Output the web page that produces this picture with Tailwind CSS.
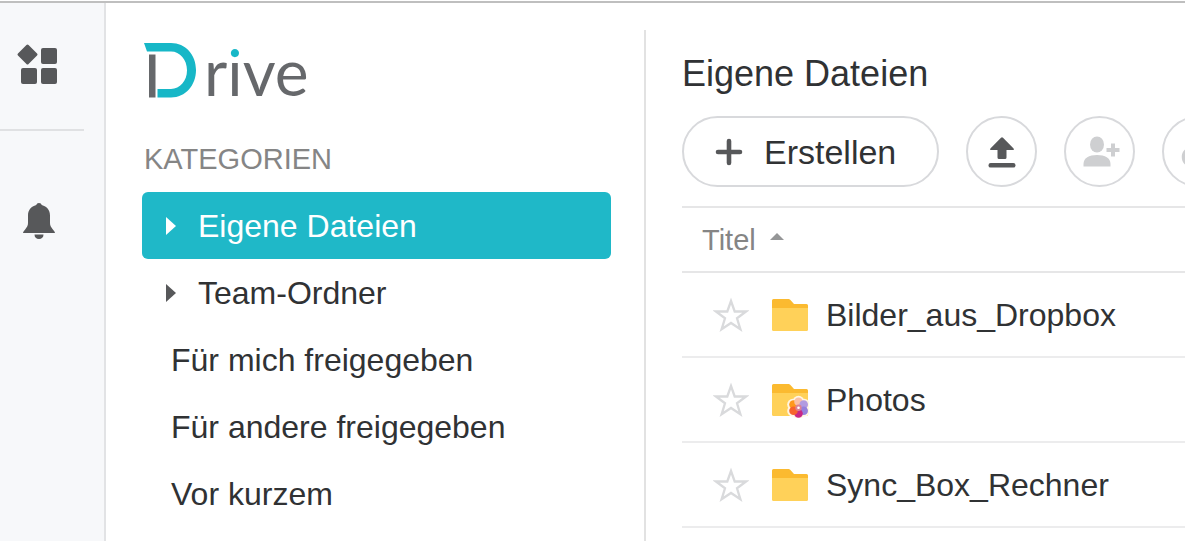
<!DOCTYPE html>
<html lang="de">
<head>
<meta charset="utf-8">
<meta name="viewport" content="width=device-width, initial-scale=1">
<title>Drive</title>
<script src="https://cdn.jsdelivr.net/npm/@tailwindcss/browser@4"></script>
</head>
<body class="flex h-screen flex-col overflow-hidden bg-white font-['Liberation_Sans',Arial,sans-serif] text-[32px] leading-9 text-[#303234]">
<div class="h-[3px] shrink-0 border-b-2 border-[#bfbfbf]"></div>
<div class="flex min-h-0 flex-1">
  <aside class="flex w-[106px] shrink-0 flex-col border-r-2 border-[#e2e3e5] bg-[#f7f8fa]">
    <div class="mr-5 border-b-2 border-[#e0e1e3] pt-10 pb-[42px] pl-4">
      <button type="button" aria-label="Apps" class="block">
        <svg class="block h-11 w-11" viewBox="0 0 44 44" fill="#57585a"><rect x="4" y="4" width="15" height="15" rx="1.5" transform="rotate(45 11.5 11.5)"/><rect x="25" y="5" width="16" height="16" rx="2"/><rect x="5" y="25" width="16" height="16" rx="2"/><rect x="25" y="25" width="16" height="16" rx="2"/></svg>
      </button>
    </div>
    <button type="button" aria-label="Benachrichtigungen" class="mt-[70px] ml-5 block w-10">
      <svg class="block h-10 w-10" viewBox="0 0 40 40" fill="#57585a"><path d="M19 2c1.500 0 2.400.9 2.700 2.100C27 5.500 30 9.500 30 14.500V22c0 2.500 1 4 2.500 6l2.100 2.700c.6.900.4 1.300-.5 1.300H3.900c-.9 0-1.100-.4-.5-1.300L5.500 28C7 26 8 24.500 8 22v-7.500C8 9.500 11 5.500 16.300 4.100 16.600 2.900 17.500 2 19 2zM14.500 33.500h9c0 2.800-1.800 4.500-4.500 4.500s-4.500-1.700-4.500-4.500z"/></svg>
    </button>
  </aside>

  <div class="w-[540px] shrink-0 pt-[27px]">
    <nav class="h-full border-r-2 border-[#e2e2e2] pr-[33px] pl-9" aria-label="Kategorien">
      <a href="#" aria-label="Drive" class="flex h-[102px] items-start">
        <svg class="mt-[13px] mr-0.5 h-[56px] w-[60px] shrink-0" viewBox="0 0 60 56"><path fill="#17b7c7" d="M2 0h27c14.500 0 25 11.800 25 27S43.500 54.500 29 54.500H15.500V46H29c9 0 16-8 16-18.700S38 8.500 29 8.500H5z"/><path fill="#66686b" d="M7 11.500h6.500v43H7z"/></svg>
        <span class="mt-1.5 bg-linear-to-b from-[#17b7c7] from-[34%] to-[#66686b] to-[34%] bg-clip-text font-['Lato',sans-serif] text-[64px] leading-[72px] text-transparent">rive</span>
      </a>
      <h2 class="pt-[11px] pb-[17px] pl-0.5 text-[29px] leading-8 text-[#858585]">KATEGORIEN</h2>
      <ul>
        <li><a href="#" aria-current="page" class="flex h-[67px] items-center rounded-md bg-[#1fb8c8] pl-6 text-white"><svg class="mr-[22px] h-[18px] w-2.5" viewBox="0 0 10 18" fill="currentColor"><path d="M0 0l10 9-10 9z"/></svg>Eigene Dateien</a></li>
        <li><a href="#" class="flex h-[67px] items-center rounded-md pl-6"><svg class="mr-[22px] h-[18px] w-2.5" viewBox="0 0 10 18" fill="#57585a"><path d="M0 0l10 9-10 9z"/></svg>Team-Ordner</a></li>
        <li><a href="#" class="flex h-[67px] items-center rounded-md pl-[29px]">Für mich freigegeben</a></li>
        <li><a href="#" class="flex h-[67px] items-center rounded-md pl-[29px]">Für andere freigegeben</a></li>
        <li><a href="#" class="flex h-[67px] items-center rounded-md pl-[29px]">Vor kurzem</a></li>
      </ul>
    </nav>
  </div>

  <main class="min-w-0 flex-1 overflow-hidden pt-[51px] pl-9">
    <h1 class="text-[36px] leading-10">Eigene Dateien</h1>
    <div class="mt-[22px] flex gap-[27px] pb-[19px]">
      <button type="button" class="flex h-[71px] w-[257px] shrink-0 items-center rounded-full border-2 border-[#d8d9dc] pl-[31px] text-[34px] leading-10"><svg class="mr-[21px] h-7 w-7" viewBox="0 0 28 28" fill="none" stroke="#57585a" stroke-width="4.600" stroke-linecap="round"><path d="M14 3v22M3 14h22"/></svg>Erstellen</button>
      <button type="button" aria-label="Hochladen" class="flex size-[71px] shrink-0 items-center justify-center rounded-full border-2 border-[#d8d9dc]"><svg class="size-8" viewBox="0 0 32 32" fill="#57585a"><path d="M15 1.800q1-.9 2 0l10.600 10.700q1.100 1.500-.6 1.500H20.500v7.500q0 1.500-1.500 1.500h-6q-1.500 0-1.500-1.500V14H5q-1.700 0-.6-1.500z"/><rect x="2.500" y="27" width="27" height="4.600" rx="2.200"/></svg></button>
      <button type="button" aria-label="Freigeben" disabled class="flex size-[71px] shrink-0 items-center justify-center rounded-full border-2 border-[#d8d9dc]"><svg class="h-8 w-10" viewBox="0 0 40 32" fill="#cecfd1"><ellipse cx="17" cy="8.500" rx="7" ry="8"/><path d="M3.500 30.500V28C3.500 22 9 19 17 19s13.500 3 13.500 9v2.500z"/><path d="M31 7.500h4v4.500h4.500v4H35v4.500h-4V16h-4.500v-4H31z"/></svg></button>
      <button type="button" aria-label="Link kopieren" disabled class="flex size-[71px] shrink-0 items-center justify-center rounded-full border-2 border-[#d8d9dc]"><svg class="size-9" viewBox="0 0 36 36" fill="none" stroke="#cecfd1" stroke-width="4.500" stroke-linecap="round"><path d="M15 15.500l-4 0q-7 1-7 7.500t7.500 7.500 8.500-6M21 21.500h4q7-1 7-7.500T24.500 7 16 12.500"/></svg></button>
    </div>
    <table class="w-full table-fixed border-collapse">
      <colgroup><col class="w-[77px]"><col class="w-[67px]"><col></colgroup>
      <thead>
        <tr class="h-[65px] border-y-2 border-[#e6e6e7]"><th scope="col" colspan="3" class="p-0 pl-5 text-left font-normal"><button type="button" class="flex items-center text-[29px] leading-8 text-[#858585]">Titel<svg class="mb-1.5 ml-3.5 h-[7px] w-3.5" viewBox="0 0 14 7" fill="#959697"><path d="M0 7l7-7 7 7z"/></svg></button></th></tr>
      </thead>
      <tbody>
        <tr class="h-[85px] border-b-2 border-[#ececed]">
          <td class="p-0 pl-[31px]"><button type="button" aria-label="Favorit" class="block"><svg class="block size-9" viewBox="0 0 36 36" fill="none" stroke="#d9dadc" stroke-width="2.300"><path d="M18 4l3.700 10.500H33l-9 6.800 3.400 11L18 26l-9.400 6.300 3.400-11-9-6.800h11.300z"/></svg></button></td>
          <td class="p-0 pl-3"><svg class="block h-9 w-[38px]" viewBox="0 0 38 36"><path fill="#fbba30" d="M1 12V3.500Q1 2 2.500 2h15q1 0 1.700.8L23 7h12.500Q37 7 37 8.500V12z"/><path fill="#ffd159" d="M1 11h36v21.500q0 1.500-1.500 1.500h-33Q1 34 1 32.500z"/></svg></td>
          <td class="p-0 whitespace-nowrap"><a href="#">Bilder_aus_Dropbox</a></td>
        </tr>
        <tr class="h-[85px] border-b-2 border-[#ececed]">
          <td class="p-0 pl-[31px]"><button type="button" aria-label="Favorit" class="block"><svg class="block size-9" viewBox="0 0 36 36" fill="none" stroke="#d9dadc" stroke-width="2.300"><path d="M18 4l3.700 10.500H33l-9 6.800 3.400 11L18 26l-9.400 6.300 3.400-11-9-6.800h11.300z"/></svg></button></td>
          <td class="p-0 pl-3"><svg class="block h-9 w-[38px]" viewBox="0 0 38 36"><path fill="#fbba30" d="M1 12V3.500Q1 2 2.500 2h15q1 0 1.700.8L23 7h12.500Q37 7 37 8.500V12z"/><path fill="#ffd159" d="M1 11h36v21.500q0 1.500-1.500 1.500h-33Q1 34 1 32.500z"/>
            <g fill="#fff6e4"><circle cx="27.500" cy="19.500" r="5.800"/><circle cx="33" cy="22.500" r="5.800"/><circle cx="33" cy="29" r="5.800"/><circle cx="27.500" cy="31.500" r="5.800"/><circle cx="22" cy="29" r="5.800"/><circle cx="22" cy="22.500" r="5.800"/></g>
            <circle cx="22.500" cy="22.500" r="4.300" fill="#ff981c"/><circle cx="27.500" cy="19.700" r="4.300" fill="#fbc0a5"/><circle cx="32.700" cy="22.500" r="4.300" fill="#b29be0"/><circle cx="32.700" cy="28.700" r="4.300" fill="#9580dc"/><circle cx="27.500" cy="31.500" r="4.300" fill="#c92786"/><circle cx="22.500" cy="28.700" r="4.300" fill="#f7632c"/><circle cx="27.500" cy="25.700" r="3.200" fill="#dd8294"/><circle cx="27.500" cy="25.700" r="1.300" fill="#fff"/></svg></td>
          <td class="p-0 whitespace-nowrap"><a href="#">Photos</a></td>
        </tr>
        <tr class="h-[85px] border-b-2 border-[#ececed]">
          <td class="p-0 pl-[31px]"><button type="button" aria-label="Favorit" class="block"><svg class="block size-9" viewBox="0 0 36 36" fill="none" stroke="#d9dadc" stroke-width="2.300"><path d="M18 4l3.700 10.500H33l-9 6.800 3.400 11L18 26l-9.400 6.300 3.400-11-9-6.800h11.300z"/></svg></button></td>
          <td class="p-0 pl-3"><svg class="block h-9 w-[38px]" viewBox="0 0 38 36"><path fill="#fbba30" d="M1 12V3.500Q1 2 2.500 2h15q1 0 1.700.8L23 7h12.500Q37 7 37 8.500V12z"/><path fill="#ffd159" d="M1 11h36v21.500q0 1.500-1.500 1.500h-33Q1 34 1 32.500z"/></svg></td>
          <td class="p-0 whitespace-nowrap"><a href="#">Sync_Box_Rechner</a></td>
        </tr>
      </tbody>
    </table>
  </main>
</div>
</body>
</html>
